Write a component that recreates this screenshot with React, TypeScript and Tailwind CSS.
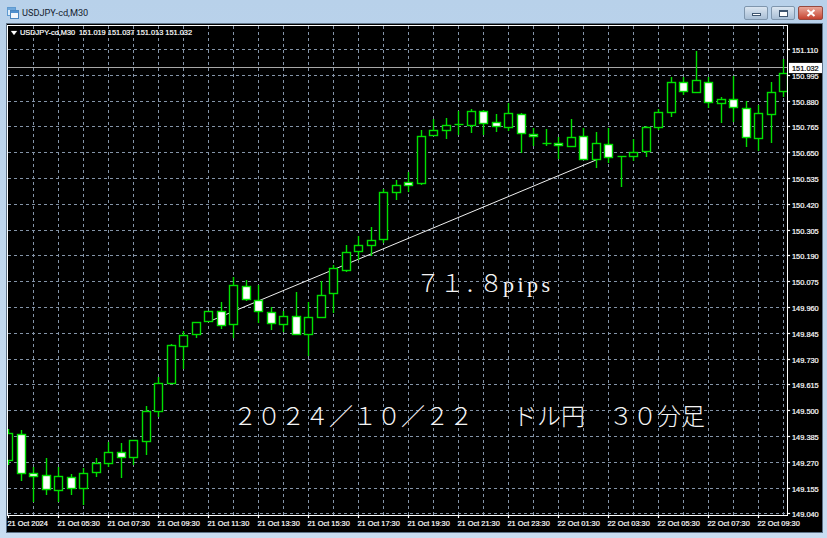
type Candle = [high: number, low: number, top: number, bottom: number, bear?: boolean];

const CANDLES: Candle[] = [
  [429, 465, 433, 460],
  [430, 481, 434, 473, true],
  [467, 502, 473, 476, true],
  [458, 495, 475, 489, true],
  [467, 502, 476, 490],
  [474, 495, 477, 488, true],
  [468, 505, 473, 488],
  [458, 477, 463, 472],
  [442, 467, 452, 463],
  [443, 478, 452, 457, true],
  [440, 465, 440, 457],
  [406, 455, 411, 441],
  [377, 417, 383, 411],
  [344, 383, 345, 383],
  [331, 369, 335, 346],
  [322, 338, 322, 334],
  [311, 321, 311, 321],
  [302, 329, 311, 325, true],
  [277, 338, 285, 324],
  [280, 301, 286, 299, true],
  [285, 323, 300, 311, true],
  [307, 330, 312, 323, true],
  [311, 332, 316, 324],
  [292, 335, 316, 334, true],
  [302, 356, 317, 334],
  [281, 317, 295, 317],
  [265, 313, 268, 293],
  [245, 272, 252, 270],
  [236, 260, 245, 251],
  [227, 256, 240, 245],
  [189, 243, 192, 239],
  [180, 200, 185, 192],
  [172, 192, 182, 185, true],
  [130, 185, 136, 183],
  [119, 136, 130, 135],
  [118, 139, 125, 130],
  [111, 135, 124, 124],
  [109, 133, 111, 125],
  [110, 135, 111, 123, true],
  [114, 132, 122, 126, true],
  [103, 131, 113, 127],
  [113, 153, 114, 133, true],
  [128, 146, 134, 136, true],
  [129, 146, 143, 143],
  [137, 159, 143, 145, true],
  [119, 147, 137, 146],
  [128, 160, 136, 159, true],
  [132, 168, 143, 159],
  [128, 163, 144, 157, true],
  [156, 187, 156, 156],
  [139, 161, 152, 156],
  [126, 157, 127, 151],
  [109, 130, 112, 127],
  [77, 117, 82, 112],
  [77, 95, 82, 91, true],
  [51, 92, 80, 92],
  [77, 108, 82, 102, true],
  [97, 123, 99, 103],
  [76, 122, 99, 107, true],
  [101, 147, 108, 137, true],
  [105, 151, 113, 138],
  [82, 143, 92, 114],
  [59, 97, 73, 91],
];

const PRICES = [
  "151.110", "150.995", "150.880", "150.765", "150.650", "150.535", "150.420",
  "150.305", "150.190", "150.075", "149.960", "149.845", "149.730", "149.615",
  "149.500", "149.385", "149.270", "149.155", "149.040",
];

const DATES = [
  "21 Oct 2024", "21 Oct 05:30", "21 Oct 07:30", "21 Oct 09:30", "21 Oct 11:30",
  "21 Oct 13:30", "21 Oct 15:30", "21 Oct 17:30", "21 Oct 19:30", "21 Oct 21:30",
  "21 Oct 23:30", "22 Oct 01:30", "22 Oct 03:30", "22 Oct 05:30", "22 Oct 07:30",
  "22 Oct 09:30",
];

const GREEN = "#00e000";
const GRID = "#8494a8";
const LEFT = 8;
const RIGHT = 787;
const TOP = 26;
const BOTTOM = 515;

function priceY(i: number) {
  return Math.round(49 + 25.8 * i) + 0.5;
}

function Chart() {
  return (
    <svg viewBox="7 24 815 508" className="block h-[508px] w-[815px]">
      <defs>
        <clipPath id="plot">
          <rect x={LEFT} y={TOP} width={RIGHT - LEFT} height={BOTTOM - TOP} />
        </clipPath>
      </defs>

      {/* grid */}
      <g stroke={GRID} strokeDasharray="3 3" shapeRendering="crispEdges">
        {PRICES.map((p, i) => (
          <line key={p} x1={LEFT} x2={RIGHT} y1={priceY(i)} y2={priceY(i)} />
        ))}
        {Array.from({ length: 31 }, (_, i) => (
          <line key={i} x1={33.5 + i * 25} x2={33.5 + i * 25} y1={TOP} y2={BOTTOM} />
        ))}
      </g>

      {/* bid line + trend line */}
      <line x1={LEFT} x2={RIGHT} y1={67.5} y2={67.5} stroke="#a8a8a8" shapeRendering="crispEdges" />
      <line x1={208} y1={322} x2={596} y2={160} stroke="#f0f0f0" strokeWidth={1} />

      {/* candles */}
      <g clipPath="url(#plot)" stroke={GREEN} strokeWidth={1.4}>
        {CANDLES.map(([high, low, top, bottom, bear], i) => {
          const x = Math.floor(8.5 + 12.5 * i) + 0.5;
          return (
            <g key={i}>
              <line x1={x} x2={x} y1={high} y2={low} />
              {top === bottom ? (
                <line x1={x - 4} x2={x + 5} y1={top + 0.5} y2={top + 0.5} />
              ) : (
                <rect
                  x={x - 4}
                  y={top + 0.5}
                  width={8}
                  height={bottom - top}
                  fill={bear ? "#ffffff" : "#000000"}
                />
              )}
            </g>
          );
        })}
      </g>

      {/* frame */}
      <rect
        x={LEFT - 0.5}
        y={TOP - 0.5}
        width={RIGHT - LEFT + 1}
        height={BOTTOM - TOP + 1}
        fill="none"
        stroke="#ffffff"
        shapeRendering="crispEdges"
      />

      {/* axes */}
      <g className="fill-white stroke-white stroke-[0.2px] text-[7.4px] [font-family:'Liberation_Sans',sans-serif]">
        <path d="M11 31h6l-3 4z" />
        <text x={20} y={35}>USDJPY-cd,M30</text>
        <text x={79} y={35} className="whitespace-pre">151.019 151.037 151.013 151.032</text>

        {PRICES.map((p, i) => (
          <g key={p}>
            <rect x={787} y={priceY(i) - 0.5} width={3} height={1} />
            <text x={792} y={priceY(i) + 3}>{p}</text>
          </g>
        ))}
        {DATES.map((d, i) => (
          <g key={d}>
            <rect x={LEFT + 50 * i} y={515} width={1} height={3} />
            <text x={LEFT + 50 * i - 0.5} y={526}>{d}</text>
          </g>
        ))}

        <rect x={789} y={63} width={33} height={10} />
        <text x={792} y={71} className="fill-black stroke-black">151.032</text>
      </g>
    </svg>
  );
}

function ChildIcon() {
  return (
    <svg viewBox="0 0 12 12" className="h-3 w-3 shrink-0">
      <rect x="0.5" y="0.5" width="8" height="8" fill="#dcebf8" stroke="#5f9ad0" />
      <rect x="1" y="1" width="7" height="2" fill="#6fa8dc" />
      <rect x="3.5" y="3.5" width="8" height="8" fill="#f2f7fc" stroke="#4a86c0" />
      <rect x="4" y="4" width="7" height="2" fill="#4f90cf" />
    </svg>
  );
}

function WindowButtons() {
  return (
    <div className="flex h-[14px] items-stretch gap-[3px]">
      <div className="flex w-6 items-center justify-center rounded-[2px] border border-[#7f96ad] bg-gradient-to-b from-[#dbe6f1] to-[#a9bfd6]">
        <span className="mt-[2px] h-[3px] w-[9px] border border-[#3f5670] bg-white" />
      </div>
      <div className="flex w-6 items-center justify-center rounded-[2px] border border-[#7f96ad] bg-gradient-to-b from-[#dbe6f1] to-[#a9bfd6]">
        <span className="h-[7px] w-[9px] border border-[#3f5670] border-t-2 bg-white" />
      </div>
      <div className="flex w-[25px] items-center justify-center rounded-[2px] border border-[#96493f] bg-gradient-to-b from-[#e8a598] to-[#c4412f]">
        <svg viewBox="0 0 10 8" className="h-2 w-[10px]">
          <path d="M1.5 1l7 6M8.5 1l-7 6" stroke="#ffffff" strokeWidth="2" fill="none" />
        </svg>
      </div>
    </div>
  );
}

export default function App() {
  return (
    <div className="flex h-[538px] w-[827px] flex-col overflow-hidden bg-gradient-to-b from-[#b8d1ea] to-[#c9ddf1] [font-family:'Liberation_Sans',sans-serif]">
      {/* Title bar */}
      <div className="flex h-[23px] shrink-0 items-center justify-between pl-[7px] pr-[4px] pt-[3px]">
        <div className="flex items-center gap-[3px]">
          <ChildIcon />
          <span className="text-[9.2px] text-[#14222f] [font-family:Roboto,sans-serif]">USDJPY-cd,M30</span>
        </div>
        <WindowButtons />
      </div>

      {/* Chart window */}
      <div className="relative ml-[6px] h-[510px] w-[817px] border border-[#5f7387] bg-black">
        <Chart />
        <div className="absolute left-[409px] top-[246px] flex items-baseline text-2xl font-light leading-none text-[#f4f4f4] [font-family:'Noto_Sans_CJK_JP',sans-serif]">
          ７１
          <span className="w-3 text-center [font-family:'Liberation_Serif',serif]">.</span>
          <span className="ml-[3px]">８</span>
          <span className="text-[22px] tracking-[3.5px] [font-family:'Liberation_Serif',serif]">pips</span>
        </div>
        <div className="absolute left-[226px] top-[379px] whitespace-pre text-2xl font-light leading-none text-[#f4f4f4] [font-family:'Noto_Sans_CJK_JP',sans-serif]">
          ２０２４／１０／２２　   ドル円　３０分足
        </div>
      </div>
    </div>
  );
}
